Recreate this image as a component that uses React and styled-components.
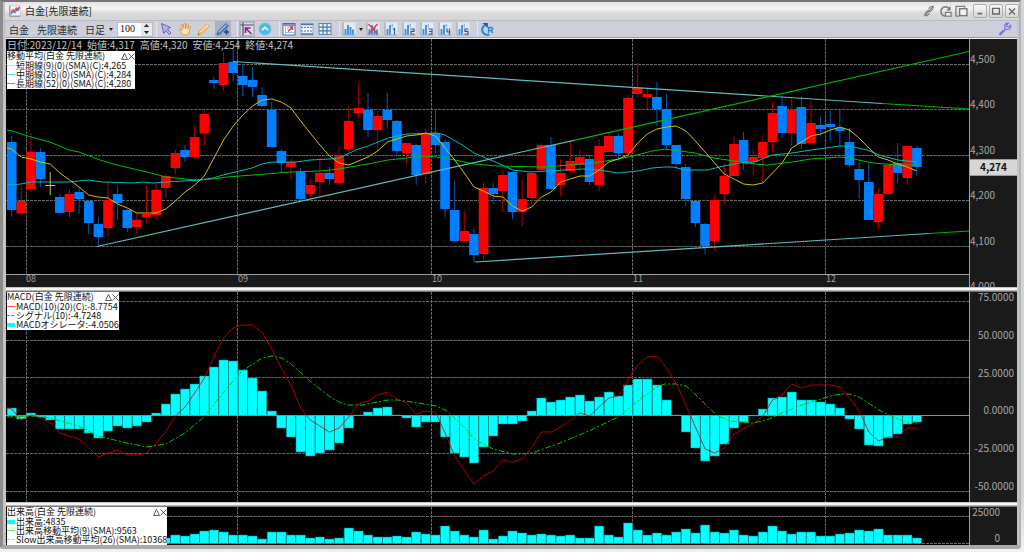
import React, { useState } from "react";
import styled, { createGlobalStyle, css } from "styled-components";

const GlobalStyle = createGlobalStyle`
  * {
    box-sizing: border-box;
  }

  body {
    margin: 0;
    background: #e4e4ec;
    font-family: "Noto Sans CJK JP", "Noto Sans", sans-serif;
    font-size: 10px;
  }

  button, input {
    font-family: inherit;
    font-size: inherit;
  }
`;

/* ------------------- Window ------------------- */
const Desktop = styled.div`
  display: flex;
  height: 100vh;
  min-height: 400px;
  padding: 0 3px 3px 0;
  background: linear-gradient(to bottom, #d3d3dd 0, #d3d3dd 90%, #f0f0f6 100%);
`;

const ChartWindow = styled.main`
  flex: 1;
  min-width: 0;
  display: flex;
  flex-direction: column;
  padding: 0 2px 0 3px;
  border: solid #8c8c8c;
  border-width: 2px 2px 4px 3px;
  border-top-color: #777;
  border-right-color: #b4b4b4;
  border-bottom-color: #a9a9a9;
  border-radius: 0 0 3px 3px;
  background: #c4c4c4;
`;

const TitleBar = styled.header`
  flex: none;
  display: flex;
  align-items: center;
  height: 18px;
  margin: 0 -2px 0 -1px;
  padding-left: 4px;
  background: linear-gradient(to bottom, #e2e2e2 0, #f3f3f3 35%, #d9d9d9 65%, #d6d6d6 100%);
`;

const Title = styled.h1`
  flex: 1;
  margin: 0 0 0 4px;
  font-size: 10px;
  font-weight: 400;
  line-height: 16px;
  color: #222;
`;

const TitleTools = styled.div`
  display: flex;
  align-items: center;
  margin-right: 4px;
`;

const PlainButton = styled.button`
  display: flex;
  align-items: center;
  justify-content: center;
  width: 16px;
  height: 16px;
  padding: 0;
  border: 0;
  background: none;
  color: #777;
`;

const WindowButtons = styled.div`
  display: flex;
  gap: 2px;
`;

const WindowButton = styled(PlainButton)`
  width: 14px;
  height: 14px;
  border: 1px solid #aaa;
  border-radius: 2px;
  background: linear-gradient(#fafafa, #d5d5d5);
`;

/* ------------------- Toolbar ------------------- */
const Toolbar = styled.div`
  flex: none;
  display: flex;
  align-items: center;
  height: 18px;
  padding: 0 4px 0 3px;
  border-top: 1px solid #b9bbc2;
  border-bottom: 1px solid #8f9bb5;
  background: #cdd0da;
`;

const TextButton = styled.button`
  margin: 0 8px 0 0;
  padding: 0;
  border: 0;
  background: none;
  line-height: 15px;
  white-space: nowrap;
  color: #2b2b33;
`;

const Caret = styled.span`
  flex: none;
  border: 2px solid transparent;
  border-top: 3px solid #222;
  border-bottom: 0;
`;

const PeriodButton = styled(TextButton)`
  display: flex;
  align-items: center;
  gap: 4px;
  margin-right: 4px;
`;

const CountBox = styled.div`
  display: flex;
  height: 15px;
  width: 36px;
  border: 1px solid #bbbdc6;
  background: #fff;
`;

const CountInput = styled.input`
  flex: 1;
  min-width: 0;
  padding: 0 0 2px 2px;
  border: 0;
  outline: 0;
  background: none;
  font-family: "Liberation Serif", serif;
  font-size: 10px;
  color: #111;
`;

const Spinner = styled.div`
  display: flex;
  flex-direction: column;
  width: 11px;
  background: #e8e8ea;
`;

const SpinButton = styled.button`
  flex: 1;
  display: flex;
  align-items: center;
  justify-content: center;
  padding: 0;
  border: 0;
  background: none;
`;

const ToolGroup = styled.div`
  display: flex;
  align-items: center;
  gap: ${(props) => props.$gap || 2}px;
  margin-left: ${(props) => props.$before || 6}px;
  padding-left: 1px;
  border-left: 1px solid #e6e8ee;
`;

const ToolButton = styled(PlainButton)`
  ${(props) =>
    props.$active &&
    css`
      background: #aab3c4;
    `}
`;

const Spacer = styled.div`
  flex: 1;
`;

/* ------------------- Panes ------------------- */
const Panes = styled.div`
  flex: 1;
  min-height: 0;
  display: flex;
  flex-direction: column;
  border-top: 1px solid #f4f4f4;
`;

const Pane = styled.section`
  flex: ${(props) => props.$share} 1 0;
  min-height: 0;
  display: flex;
  background: #000;
`;

const Splitter = styled.div`
  flex: none;
  height: 5px;
  background: linear-gradient(#c8c8c8 0 1px, #f6f6f6 1px 3px, #b2b2b2 3px 4px, #777 4px);
`;

const PlotColumn = styled.div`
  position: relative;
  flex: 1;
  min-width: 0;
  display: flex;
  flex-direction: column;
`;

const Plot = styled.svg`
  flex: 1;
  min-height: 0;
  width: 100%;
  display: block;
`;

const DateAxis = styled.div`
  flex: none;
  display: grid;
  grid-template-columns: 20fr 212fr 194fr 201fr 193fr 143fr;
  height: 13px;
  border-top: 1px solid #a0a0a0;
  background: #1a1a1a;
  font-size: 9px;
  line-height: 8px;
  color: #a0a0a0;
`;

const ValueAxis = styled.div`
  position: relative;
  flex: none;
  display: flex;
  width: 48px;
  overflow: hidden;
  border-left: 1px solid #a0a0a0;
  background: #1a1a1a;
`;

const ValueList = styled.div`
  flex: 1;
  display: flex;
  flex-direction: column;
  justify-content: space-between;
  margin: ${(props) => props.$inset};
  line-height: ${(props) => props.$line || 12}px;
  text-align: ${(props) => props.$align || "right"};
  color: #a8a8a8;
`;

const PriceTag = styled.div`
  position: absolute;
  top: 48.5%;
  left: 0;
  right: 0;
  height: 17px;
  padding-left: 10px;
  border: solid #9a9a9a;
  border-width: 1px 0;
  background: #d6d6d6;
  font-weight: 700;
  line-height: 14px;
  color: #111;
`;

const QuoteLine = styled.div`
  position: absolute;
  top: 0;
  left: 1px;
  display: flex;
  gap: 5px;
  line-height: 12px;
  white-space: nowrap;
  color: #c4c4c4;
`;

/* ------------------- Legends ------------------- */
const LegendBox = styled.div`
  position: absolute;
  top: ${(props) => props.$top || 0}px;
  left: 1px;
  min-width: ${(props) => props.$width}px;
  padding-bottom: 1px;
  background: #fff;
  font-size: 9px;
  line-height: 9px;
  white-space: nowrap;
  color: #111;
`;

const LegendHead = styled.div`
  display: flex;
  align-items: center;
  height: 10px;
  line-height: 8px;
`;

const LegendName = styled.span`
  flex: 1;
`;

const LegendButton = styled(PlainButton)`
  width: 7px;
  height: 9px;
  color: #333;
`;

const LegendRow = styled.div`
  display: flex;
  align-items: center;
  gap: 1px;
  height: 9px;
`;

const Swatch = styled.span`
  flex: none;
  width: 8px;
  height: ${(props) => (props.$block ? 4 : 1)}px;
  background: ${(props) =>
    props.$dashed
      ? `repeating-linear-gradient(to right, ${props.$color} 0 3px, transparent 3px 4px)`
      : props.$color};
`;

/* ------------------- Data ------------------- */
const STEP = 9.63;
const FIRST = 11.7;
const MONTH_LINES = [26, 237.7, 431, 632.7, 825.5];
const xAt = (i) => FIRST + i * STEP;

// direction, high, body top, body bottom, low
const CANDLES = [
  ["d", 136, 142, 210, 217], ["u", 186, 201, 213, 213], ["u", 133, 152, 189, 192],
  ["d", 148, 152, 179, 187], ["x", 172, 185, 186, 195], ["d", 194, 197, 213, 213],
  ["u", 189, 194, 212, 218], ["d", 187, 192, 199, 214], ["d", 200, 201, 223, 234],
  ["d", 217, 224, 237, 245], ["u", 182, 200, 228, 236], ["d", 186, 194, 203, 220],
  ["d", 209, 210, 228, 232], ["u", 213, 220, 227, 234], ["u", 186, 214, 217, 223],
  ["u", 182, 190, 215, 220], ["u", 174, 176, 188, 198], ["u", 150, 153, 168, 174],
  ["d", 145, 150, 157, 162], ["u", 126, 137, 157, 159], ["u", 111, 114, 133, 146],
  ["d", 77, 80, 83, 89], ["u", 52, 63, 85, 91], ["d", 49, 62, 73, 81],
  ["d", 64, 76, 85, 96], ["d", 67, 80, 87, 97], ["d", 87, 95, 106, 107],
  ["d", 102, 110, 147, 147], ["d", 149, 151, 163, 173], ["u", 159, 162, 167, 179],
  ["d", 168, 172, 199, 200], ["u", 179, 185, 194, 200], ["u", 158, 173, 182, 197],
  ["d", 167, 173, 179, 185], ["u", 147, 155, 183, 184], ["u", 106, 121, 149, 152],
  ["u", 83, 108, 113, 117], ["d", 93, 110, 130, 137], ["u", 111, 116, 130, 151],
  ["d", 93, 110, 120, 129], ["d", 120, 121, 151, 155], ["u", 143, 143, 153, 163],
  ["d", 144, 145, 175, 185], ["u", 129, 133, 174, 183], ["d", 109, 133, 145, 153],
  ["d", 139, 142, 209, 217], ["d", 181, 210, 241, 241], ["u", 211, 231, 241, 242],
  ["d", 228, 234, 255, 262], ["u", 182, 188, 254, 260], ["d", 183, 188, 194, 204],
  ["u", 170, 175, 191, 212], ["d", 172, 172, 212, 219], ["u", 180, 199, 212, 226],
  ["u", 172, 173, 198, 205], ["u", 143, 145, 170, 171], ["d", 137, 145, 189, 190],
  ["u", 159, 173, 185, 196], ["u", 141, 161, 171, 173], ["u", 150, 157, 165, 172],
  ["d", 155, 159, 182, 185], ["u", 139, 146, 185, 191], ["u", 135, 136, 152, 152],
  ["d", 133, 136, 153, 161], ["u", 95, 98, 153, 153], ["u", 63, 88, 94, 97],
  ["u", 89, 94, 97, 109], ["d", 82, 97, 109, 126], ["d", 94, 109, 145, 149],
  ["d", 145, 145, 164, 168], ["d", 164, 167, 199, 206], ["d", 201, 201, 223, 227],
  ["d", 223, 224, 246, 254], ["u", 195, 200, 241, 251], ["u", 163, 176, 194, 203],
  ["u", 137, 144, 176, 176], ["d", 132, 140, 162, 170], ["u", 149, 157, 162, 175],
  ["u", 135, 142, 158, 182], ["u", 102, 113, 142, 151], ["d", 96, 106, 133, 138],
  ["u", 97, 110, 133, 146], ["d", 97, 107, 144, 149], ["u", 101, 123, 143, 143],
  ["d", 117, 125, 129, 137], ["d", 111, 124, 127, 141], ["d", 110, 128, 131, 146],
  ["d", 128, 142, 165, 167], ["d", 161, 169, 180, 199], ["d", 163, 182, 220, 220],
  ["u", 188, 194, 222, 229], ["u", 164, 165, 194, 195], ["d", 143, 163, 173, 183],
  ["u", 146, 146, 178, 185], ["d", 146, 148, 167, 176],
];

const SHORT_MA = [
  149, 157, 159, 162, 164, 173, 180, 187, 195, 197, 198, 204, 208, 213, 213, 213,
  209, 201, 192, 185, 176, 158, 140, 126, 115, 106, 100, 99, 102, 108, 121, 133,
  145, 156, 163, 165, 161, 157, 151, 142, 139, 136, 135, 133, 136, 148, 160, 173,
  187, 191, 196, 197, 206, 211, 207, 197, 192, 182, 179, 176, 176, 170, 162, 159,
  155, 143, 134, 129, 127, 126, 131, 141, 152, 163, 174, 179, 184, 185, 183, 173,
  163, 148, 142, 136, 134, 130, 127, 130, 138, 148, 157, 160, 164, 167, 171,
];

const MIDDLE_MA =
  "7,185 21,184 31,182 60,182 69,182 88,180 103,182 133,183 143,182 153,183 167,182 200,180 213,178 223,175 252,168 262,164 272,162 297,162 310,160 330,159 339,158 358,149 368,146 388,138 407,134 437,133 445,135 464,146 474,153 493,161 513,170 530,172 563,170 583,169 599,170 618,173 638,171 652,168 665,167 673,167 686,170 707,170 724,166 740,163 755,162 772,155 792,153 811,150 840,146 849,146 867,150 879,155 898,160 917,162";

const LONG_MA =
  "7,130 12,131 31,137 50,142 69,150 79,152 100,160 117,165 147,172 166,177 195,180 213,179 227,177 291,172 320,171 339,169 350,167 368,164 388,160 407,158 423,156 437,157 455,160 474,164 497,166 543,167 570,165 593,163 618,159 633,156 652,151 665,149 673,150 695,153 714,158 734,161 755,164 767,165 792,162 811,159 840,157 849,158 873,163 898,165 917,165";

const OSCILLATOR = [
  408, 419, 413, 417, 420, 429, 429, 429, 433, 438, 431, 426, 428, 426, 422, 413,
  404, 394, 389, 384, 376, 367, 360, 361, 370, 378, 391, 411, 428, 437, 452, 456,
  453, 450, 443, 428, 415, 412, 408, 407, 415, 418, 427, 422, 422, 437, 453, 457,
  463, 447, 436, 424, 424, 421, 411, 398, 402, 400, 397, 395, 401, 397, 392, 396,
  385, 379, 379, 385, 400, 415, 432, 448, 461, 456, 444, 428, 422, 416, 409, 398,
  397, 392, 400, 400, 402, 404, 408, 419, 429, 445, 446, 438, 434, 424, 422,
];

const MACD = [
  409, 420, 415, 418, 422, 433, 436, 439, 448, 457, 453, 450, 455, 455, 453, 443,
  432, 416, 407, 393, 378, 357, 338, 328, 325, 325, 332, 349, 368, 385, 408, 420,
  426, 432, 428, 417, 404, 401, 395, 392, 399, 403, 414, 411, 412, 433, 456, 470,
  484, 476, 471, 460, 462, 459, 448, 432, 432, 427, 420, 413, 416, 407, 398, 396,
  380, 365, 357, 356, 368, 383, 405, 427, 449, 453, 448, 434, 429, 424, 416, 400,
  395, 384, 388, 385, 385, 385, 387, 398, 411, 432, 441, 437, 437, 428, 428,
];

const SIGNAL =
  "7,417 31,416 50,418 79,426 98,436 127,443 147,447 166,444 185,433 204,417 223,393 242,371 262,358 272,356 282,358 291,364 310,381 330,397 339,402 348,405 363,405 388,400 397,400 412,402 436,406 447,411 464,427 474,439 493,449 513,454 522,454 532,453 560,443 589,431 618,417 628,409 643,397 657,387 665,384 676,384 686,386 695,394 705,404 718,416 730,421 753,423 767,420 782,413 802,405 827,397 840,394 849,394 859,397 879,410 898,419 907,422 917,422";

const VOLUME_FROM = 16;
const VOLUME = [
  538, 535, 536, 534, 531, 530, 532, 535, 535, 536, 539, 532, 532, 535, 535, 538,
  537, 539, 538, 528, 531, 535, 537, 537, 536, 537, 532, 534, 535, 526, 531, 535,
  537, 530, 539, 536, 531, 533, 535, 534, 535, 536, 535, 538, 538, 526, 535, 537,
  523, 530, 535, 533, 535, 532, 529, 533, 525, 532, 533, 530, 535, 536, 532, 526,
  531, 534, 532, 532, 536, 536, 534, 533, 530, 531, 529, 535, 535, 535, 538,
];

const toPoints = (values) =>
  values.map((y, i) => `${xAt(i).toFixed(1)},${y}`).join(" ");

/* ------------------- Chart parts ------------------- */
const Grid = ({ rows, top, bottom }) => (
  <g stroke="#666" strokeDasharray="3 1" shapeRendering="crispEdges">
    {rows.map((y) => (
      <line key={y} x1="6" x2="969" y1={y} y2={y} />
    ))}
    {MONTH_LINES.map((x) => (
      <line key={x} x1={x} x2={x} y1={top} y2={bottom} />
    ))}
  </g>
);

const Candle = ({ index, data }) => {
  const [kind, high, top, bottom, low] = data;
  const x = xAt(index);
  if (kind === "x") {
    return (
      <path
        d={`M${x} ${high}V${low}M${x - 5} ${top + 0.5}H${x + 5}`}
        stroke="#d2c45c"
      />
    );
  }
  const up = kind === "u";
  return (
    <g>
      <line x1={x} x2={x} y1={high} y2={low} stroke={up ? "#b80000" : "#005cb8"} />
      <rect
        x={x - 4.8}
        y={top}
        width="9.6"
        height={Math.max(bottom - top, 1)}
        fill={up ? "#ff0000" : "#0080ff"}
      />
    </g>
  );
};

const Bars = ({ values, from = 0, base }) => (
  <g fill="#00ffff" stroke="#007f7f" strokeWidth="0.5">
    {values.map((y, i) => (
      <rect
        key={i}
        x={xAt(i + from) - 4.6}
        y={Math.min(y, base)}
        width="9.3"
        height={Math.abs(y - base)}
      />
    ))}
  </g>
);

const PricePlot = () => (
  <Plot viewBox="6 39 963 235" preserveAspectRatio="none" role="img" aria-label="白金 先限連続 日足">
    <Grid rows={[64.5, 109.5, 155.5, 200.5, 246.5]} top={39} bottom={274} />
    {CANDLES.map((data, i) => (
      <Candle key={i} index={i} data={data} />
    ))}
    <g fill="none" strokeWidth="1">
      <polyline points={LONG_MA} stroke="#00c000" />
      <polyline points={MIDDLE_MA} stroke="#00bcbc" />
      <polyline points={`7,148 ${toPoints(SHORT_MA)}`} stroke="#d0c400" />
    </g>
    <g stroke="#62bcbc" strokeWidth="1.2">
      <line x1="97" y1="246.5" x2="574" y2="140.3" />
      <line x1="233" y1="61.5" x2="882" y2="103.5" />
      <line x1="475" y1="262" x2="929" y2="233.5" />
    </g>
    <g stroke="#00b400" strokeWidth="1.2">
      <line x1="574" y1="140.3" x2="969" y2="51.5" />
      <line x1="882" y1="103.5" x2="969" y2="109" />
      <line x1="929" y1="233.5" x2="969" y2="231" />
    </g>
  </Plot>
);

const MacdPlot = () => (
  <Plot viewBox="6 292 963 210" preserveAspectRatio="none" role="img" aria-label="MACD">
    <Grid rows={[301.5, 340.5, 377.5, 453.5, 491.5]} top={292} bottom={502} />
    <Bars values={OSCILLATOR} base={415.5} />
    <line x1="6" x2="969" y1="415.5" y2="415.5" stroke="#8c8c8c" />
    <g fill="none" strokeWidth="1">
      <polyline points={SIGNAL} stroke="#00c800" strokeDasharray="6 2 2 2" />
      <polyline points={`7,408 ${toPoints(MACD)}`} stroke="#e00000" strokeOpacity="0.8" />
    </g>
  </Plot>
);

const VolumePlot = () => (
  <Plot viewBox="6 507 963 38" preserveAspectRatio="none" role="img" aria-label="出来高">
    <Grid rows={[516.5, 543.5]} top={507} bottom={544} />
    <Bars values={VOLUME} from={VOLUME_FROM} base={543.5} />
  </Plot>
);

const Legend = ({ name, top, width, rows }) => (
  <LegendBox $top={top} $width={width}>
    <LegendHead>
      <LegendName>{name}</LegendName>
      <LegendButton aria-label="折りたたむ">
        <svg width="7" height="7" viewBox="0 0 7 7" fill="none" stroke="currentColor" strokeWidth="0.8">
          <path d="M0.5 6.5 3.5 0.5 6.5 6.5Z" />
        </svg>
      </LegendButton>
      <LegendButton aria-label="削除">
        <svg width="7" height="7" viewBox="0 0 7 7" fill="none" stroke="currentColor" strokeWidth="0.8">
          <path d="M0.5 0.5 6.5 6.5M6.5 0.5 0.5 6.5" />
        </svg>
      </LegendButton>
    </LegendHead>
    {rows.map((row) => (
      <LegendRow key={row.text}>
        <Swatch $color={row.color} $block={row.block} $dashed={row.dashed} />
        <span>{row.text}</span>
      </LegendRow>
    ))}
  </LegendBox>
);

const Axis = ({ values, inset, align, line, children }) => (
  <ValueAxis>
    <ValueList $inset={inset} $align={align} $line={line}>
      {values.map((value) => (
        <span key={value}>{value}</span>
      ))}
    </ValueList>
    {children}
  </ValueAxis>
);

/* ------------------- Icons ------------------- */
const Icon = ({ children, size = 14 }) => (
  <svg width={size} height={size} viewBox="0 0 14 14" fill="none" aria-hidden="true">
    {children}
  </svg>
);

const AppIcon = () => (
  <Icon size={12}>
    <rect x="0.5" y="1" width="12.5" height="12" fill="#f2f2f4" stroke="#b5b5bd" strokeWidth="0.6" />
    <path d="M1 1V13H13" stroke="#777" />
    <path d="M2 11 5 7.5 7 9 9 5.5 10.5 6.5 12.5 3" stroke="#4a78d8" strokeWidth="1.4" />
    <path d="M2 8.5 4.5 5.5 6.5 7 8.5 3.5 10 5 12 2" stroke="#e03b3b" strokeWidth="1.3" />
  </Icon>
);

const PointerIcon = () => (
  <Icon>
    <path d="M2.5 1.5 11.5 5.5 8.3 7 12 11 10.3 12.6 6.8 8.6 4.8 11.5Z" fill="#b9b2ee" stroke="#6a60c8" />
  </Icon>
);

const HandIcon = () => (
  <Icon>
    <path
      d="M5 13 1.5 8.4C.8 7.2 2.1 6.6 3 7.5L4.2 8.7 3 3.8C2.8 2.5 4.2 2.3 4.6 3.4L5.8 6.5 5.7 2C5.8.8 7.2.8 7.4 2L7.7 6.4 8.8 2.6C9.2 1.5 10.5 1.8 10.3 3L9.7 7.1 11.4 4.6C12.2 3.7 13.2 4.4 12.6 5.5L10.8 10.4 9.6 13Z"
      fill="#ffe0b5"
      stroke="#d08a35"
      strokeWidth="0.8"
    />
  </Icon>
);

const PencilIcon = () => (
  <Icon>
    <path d="M1 13 2 9.5 10 1.8 12.4 4.2 4.4 12Z" fill="#ffc56a" stroke="#d99a3a" strokeWidth="0.8" />
    <path d="M9 3 11.3 5.2M3 10 10.5 2.8" stroke="#fff0c8" />
    <path d="M1 13 1.5 11.3 2.7 12.5Z" fill="#555" />
  </Icon>
);

const PenIcon = () => (
  <Icon>
    <path d="M1 12.8 2 9.5 9.8 1.5 12.4 4 4.4 11.8Z" fill="#5289d2" stroke="#23509a" strokeWidth="0.8" />
    <path d="M3 9.8 10 2.8" stroke="#cfe2ff" />
    <path d="M8 10H13M10.5 7.5V12.5" stroke="#1d3e88" strokeWidth="1.6" />
  </Icon>
);

const PivotIcon = () => (
  <Icon>
    <path d="M1 1H13V13H1Z" fill="#d8dae4" />
    <path d="M3 .5V13.5M.5 3H13.5" stroke="#5a4668" strokeWidth="1.2" />
    <path d="M11.5 12 6 6.5M5.5 11V6H10.5" stroke="#8b1b8b" strokeWidth="1.6" />
  </Icon>
);

const UpIcon = () => (
  <Icon>
    <circle cx="7" cy="7" r="6" fill="#4dbbe4" stroke="#6cc4e6" />
    <path d="M4 8.3 7 5.3 10 8.3" stroke="#fff" strokeWidth="1.6" />
  </Icon>
);

const ChartSettingIcon = () => (
  <Icon>
    <rect x="1" y="1.5" width="12" height="11.5" fill="#fff" stroke="#4470b0" />
    <path d="M1 3H13" stroke="#4470b0" strokeWidth="1.5" />
    <path d="M3.5 4V12M3 10.5H12M6 4V8" stroke="#8ea8d0" strokeWidth="0.8" />
    <path d="M6 9.5 10 5.5M7.5 5H10.5V8" stroke="#d83838" strokeWidth="1.4" />
  </Icon>
);

const RowsIcon = () => (
  <Icon>
    <rect x="1" y="1.5" width="12" height="11.5" fill="#eef3fb" stroke="#7d93b8" strokeWidth="0.7" />
    <path d="M1 2.5H13M1 12H13" stroke="#4a76b8" strokeWidth="1.4" />
    <path d="M1 5.5H13M1 9H13" stroke="#4a76b8" strokeDasharray="2 1" />
  </Icon>
);

const GridIcon = () => (
  <Icon>
    <rect x="1" y="1.5" width="12" height="11" fill="#eef3fb" stroke="#5f84c0" />
    <path d="M1 5.2H13M1 8.9H13M5 1.5V12.5M9 1.5V12.5" stroke="#4a72b6" strokeWidth="1.2" />
  </Icon>
);

// digit strokes for the saved layouts 1-5
const DIGITS = {
  1: "M9 7.5 10.5 6.5V12.5",
  2: "M8.5 7H12V9.3H9V12H12.5",
  3: "M8.5 7H12V12H8.5M9 9.5H12",
  4: "M9 6.5V10H12.5M11.5 6.5V12.8",
  5: "M12.3 7H9V9.3H12V12H8.5",
};

const BarsIcon = ({ digit, crossed }) => (
  <Icon>
    <path d="M.5 .5H13.5V13.5H.5Z" fill="#e5e9f0" />
    <path d="M1 .5V13H13.5" stroke="#8c98aa" />
    <path d="M3.5 12.5V7M6 12.5V3" stroke="#2f8ce0" strokeWidth="1.8" />
    {!digit && <path d="M8.5 12.5V5M11 12.5V7.5" stroke="#2f8ce0" strokeWidth="1.8" />}
    {digit && <path d={DIGITS[digit]} stroke="#2b57a5" strokeWidth="1.2" />}
    {digit && <path d="M8.2 5.5V2" stroke="#6ba9e2" />}
    {crossed && <path d="M2.5 2 11.5 12M11.5 2 2.5 12" stroke="#dc4050" strokeWidth="1.5" />}
  </Icon>
);

const ReloadIcon = () => (
  <Icon>
    <path d="M5 3.2A5 5 0 1 0 9.5 12.3" stroke="#2b86d0" strokeWidth="2" />
    <path d="M2.5 1H7.8V6Z" fill="#234ec0" />
    <path d="M8.6 11V5.5H10.8Q12.6 5.5 12.6 7T10.8 8.4H8.6M10.6 8.4 12.8 11" stroke="#2684d4" strokeWidth="1.4" />
  </Icon>
);

const WrenchIcon = () => (
  <Icon>
    <path
      d="M2 12.5 7.3 7.2M12.6 3.2 10.6 5.2 8.8 4.8 8.5 3.2 10.3 1.2C8 .8 6.2 2.5 6.8 4.9L6.9 6.6 7.8 7.5 9.4 7.4C11.6 7.8 13.2 5.6 12.6 3.2Z"
      stroke="#7a74e4"
      strokeWidth="1.3"
      fill="#dcdcff"
    />
    <path d="M1.5 12.8 5.8 8.5" stroke="#7a74e4" strokeWidth="2.4" />
  </Icon>
);

const LinkIcon = () => (
  <Icon size={12}>
    <path
      d="M6.5 4.5 9 2C10.5.8 12.8 2.5 11.6 4.4L9 7.2C8 8 6.8 7.8 6.2 7M7.8 9.5 5.2 12C3.6 13.2 1.2 11.6 2.5 9.6L5 7C6 6.2 7.2 6.4 7.8 7.2M1.5 13 12.5 1"
      stroke="#7a7a7a"
      strokeWidth="1.2"
    />
  </Icon>
);

const BackIcon = () => (
  <Icon size={13}>
    <path d="M11 4A5 5 0 1 0 6.5 12" stroke="#858585" strokeWidth="2" />
    <path d="M12.5 1V6H8Z" fill="#777" />
    <rect x="7" y="8" width="6" height="4" fill="#f4f4f4" stroke="#777" strokeWidth="1.3" />
  </Icon>
);

const CopyIcon = () => (
  <Icon size={13}>
    <path d="M10.5 3V1.5H1V12H4.5" stroke="#808080" strokeWidth="1.4" />
    <rect x="5" y="4" width="7.8" height="7.5" fill="#f3f3f3" stroke="#777" strokeWidth="1.5" />
  </Icon>
);

/* ------------------- Page ------------------- */
const QUOTES = ["日付:2023/12/14", "始値:4,317", "高値:4,320", "安値:4,254", "終値:4,274"];
const MONTHS = ["", "08", "09", "10", "11", "12"];

const App = () => {
  const [count, setCount] = useState(100);
  const [tool, setTool] = useState("pen");

  return (
    <>
      <GlobalStyle />
      <Desktop>
        <ChartWindow>
          <TitleBar>
            <AppIcon />
            <Title>白金[先限連続]</Title>
            <TitleTools>
              <PlainButton aria-label="連動"><LinkIcon /></PlainButton>
              <PlainButton aria-label="戻す"><BackIcon /></PlainButton>
              <PlainButton aria-label="複製"><CopyIcon /></PlainButton>
            </TitleTools>
            <WindowButtons>
              <WindowButton aria-label="最小化">
                <Icon size={12}><path d="M4 10H9.5" stroke="#666" strokeWidth="2" /></Icon>
              </WindowButton>
              <WindowButton aria-label="最大化">
                <Icon size={12}><path d="M3 4H11V10.5H3Z" stroke="#666" strokeWidth="1.6" /></Icon>
              </WindowButton>
              <WindowButton aria-label="閉じる">
                <Icon size={12}><path d="M3.5 4 10.5 11M10.5 4 3.5 11" stroke="#666" strokeWidth="1.6" /></Icon>
              </WindowButton>
            </WindowButtons>
          </TitleBar>

          <Toolbar>
            <TextButton>白金</TextButton>
            <TextButton>先限連続</TextButton>
            <PeriodButton>
              日足
              <Caret />
            </PeriodButton>
            <CountBox>
              <CountInput
                aria-label="表示本数"
                value={count}
                onChange={(e) => setCount(Number(e.target.value) || 0)}
              />
              <Spinner>
                <SpinButton aria-label="増やす" onClick={() => setCount(count + 1)}>
                  <svg width="5" height="3"><path d="M0 3 2.5 0 5 3Z" fill="#222" /></svg>
                </SpinButton>
                <SpinButton aria-label="減らす" onClick={() => setCount(count - 1)}>
                  <svg width="5" height="3"><path d="M0 0 2.5 3 5 0Z" fill="#222" /></svg>
                </SpinButton>
              </Spinner>
            </CountBox>
            <ToolGroup $before={3} $gap={3}>
              <ToolButton aria-label="選択" $active={tool === "select"} onClick={() => setTool("select")}>
                <PointerIcon />
              </ToolButton>
              <ToolButton aria-label="移動" $active={tool === "hand"} onClick={() => setTool("hand")}>
                <HandIcon />
              </ToolButton>
              <ToolButton aria-label="鉛筆" $active={tool === "pencil"} onClick={() => setTool("pencil")}>
                <PencilIcon />
              </ToolButton>
              <ToolButton aria-label="ライン" $active={tool === "pen"} onClick={() => setTool("pen")}>
                <PenIcon />
              </ToolButton>
            </ToolGroup>
            <ToolGroup>
              <ToolButton aria-label="十字" $active><PivotIcon /></ToolButton>
              <ToolButton aria-label="上へ"><UpIcon /></ToolButton>
            </ToolGroup>
            <ToolGroup>
              <ToolButton aria-label="チャート設定"><ChartSettingIcon /></ToolButton>
              <ToolButton aria-label="横線"><RowsIcon /></ToolButton>
              <ToolButton aria-label="目盛"><GridIcon /></ToolButton>
            </ToolGroup>
            <ToolGroup>
              <ToolButton aria-label="テクニカル"><BarsIcon /></ToolButton>
              <Caret />
              <ToolButton aria-label="テクニカル削除"><BarsIcon crossed /></ToolButton>
              {[1, 2, 3, 4, 5].map((n) => (
                <ToolButton key={n} aria-label={`テクニカル${n}`}>
                  <BarsIcon digit={n} />
                </ToolButton>
              ))}
            </ToolGroup>
            <ToolGroup>
              <ToolButton aria-label="更新"><ReloadIcon /></ToolButton>
            </ToolGroup>
            <Spacer />
            <PlainButton aria-label="設定"><WrenchIcon /></PlainButton>
          </Toolbar>

          <Panes>
            {/* -------- Price -------- */}
            <Pane $share={248}>
              <PlotColumn>
                <PricePlot />
                <DateAxis>
                  {MONTHS.map((month) => (
                    <span key={month}>{month}</span>
                  ))}
                </DateAxis>
                <QuoteLine>
                  {QUOTES.map((quote) => (
                    <span key={quote}>{quote}</span>
                  ))}
                </QuoteLine>
                <Legend
                  name="移動平均(白金 先限連続)"
                  top={12}
                  width={128}
                  rows={[
                    { text: "短期線(9)(0)(SMA)(C):4,265", color: "#f5e600" },
                    { text: "中期線(26)(0)(SMA)(C):4,284", color: "#50e6e6" },
                    { text: "長期線(52)(0)(SMA)(C):4,280", color: "#28d028" },
                  ]}
                />
              </PlotColumn>
              <Axis
                values={["4,500", "4,400", "4,300", "4,200", "4,100", "4,000"]}
                inset="14px 0 -5px 0"
                align="left"
              >
                <PriceTag>4,274</PriceTag>
              </Axis>
            </Pane>
            <Splitter />

            {/* -------- MACD -------- */}
            <Pane $share={210}>
              <PlotColumn>
                <MacdPlot />
                <Legend
                  name="MACD(白金 先限連続)"
                  width={111}
                  rows={[
                    { text: "MACD(10)(20)(C):-8.7754", color: "#f05050" },
                    { text: "シグナル(10):-4.7248", color: "#28c828", dashed: true },
                    { text: "MACDオシレータ:-4.0506", color: "#00ffff", block: true },
                  ]}
                />
              </PlotColumn>
              <Axis
                values={["75.0000", "50.0000", "25.0000", "0.0000", "-25.0000", "-50.0000"]}
                inset="0 3px 11px 0"
                line={10}
              />
            </Pane>
            <Splitter />

            {/* -------- Volume -------- */}
            <Pane $share={38}>
              <PlotColumn>
                <VolumePlot />
                <Legend
                  name="出来高(白金 先限連続)"
                  width={155}
                  rows={[
                    { text: "出来高:4835", color: "#00ffff", block: true },
                    { text: "出来高移動平均(9)(SMA):9563", color: "#50e650" },
                    { text: "Slow出来高移動平均(26)(SMA):10368", color: "#f0a0f0", dashed: true },
                  ]}
                />
              </PlotColumn>
              <Axis values={["25000", "0"]} inset="0 17px 2px 0" line={10} />
            </Pane>
          </Panes>
        </ChartWindow>
      </Desktop>
    </>
  );
};

export default App;
